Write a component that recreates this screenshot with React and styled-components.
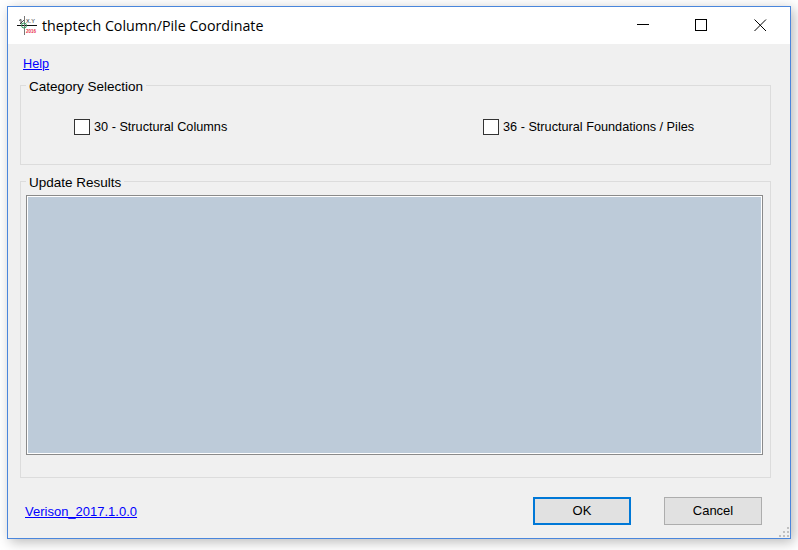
import styled, { createGlobalStyle } from "styled-components";

const GlobalStyle = createGlobalStyle`
  html, body {
    margin: 0;
    padding: 0;
    background: #ffffff;
    overflow: hidden;
  }
`;

export default function App() {
  return (
    <>
      <GlobalStyle />
      <Desktop>
        <Window>
          <TitleBar>
            <AppIcon />
            <Title>theptech Column/Pile Coordinate</Title>
            <WindowButton aria-label="Minimize">
              <svg width="13" height="13" viewBox="0 0 13 13">
                <path d="M1 5.5H13" stroke="#000" fill="none" />
              </svg>
            </WindowButton>
            <WindowButton aria-label="Maximize">
              <svg width="13" height="13" viewBox="0 0 13 13">
                <rect x="0.5" y="0.5" width="11" height="11" stroke="#000" fill="none" />
              </svg>
            </WindowButton>
            <WindowButton aria-label="Close">
              <svg width="13" height="13" viewBox="0 0 13 13">
                <path d="M0.5 0.5L12 12M12 0.5L0.5 12" stroke="#000" fill="none" />
              </svg>
            </WindowButton>
          </TitleBar>
          <Body>
            <HelpLink href="#">Help</HelpLink>
            <CategoryGroup>
              <GroupLegend>Category Selection</GroupLegend>
              <CheckRow>
                <CheckItem>
                  <CheckBox type="checkbox" />
                  30 - Structural Columns
                </CheckItem>
                <CheckItem>
                  <CheckBox type="checkbox" />
                  36 - Structural Foundations / Piles
                </CheckItem>
              </CheckRow>
            </CategoryGroup>
            <ResultsGroup>
              <GroupLegend>Update Results</GroupLegend>
              <ResultsPanel />
            </ResultsGroup>
            <Footer>
              <VersionLink href="#">Verison_2017.1.0.0</VersionLink>
              <Button $primary>OK</Button>
              <Button>Cancel</Button>
            </Footer>
            <Grip />
          </Body>
        </Window>
      </Desktop>
    </>
  );
}

function AppIcon() {
  return (
    <svg width="25" height="20" viewBox="0 0 25 20" style={{ flex: "none" }}>
      <path d="M0 9.5H20" stroke="#111" fill="none" />
      <path d="M7.5 0V19" stroke="#777" fill="none" />
      <path d="M2 4.5L4 3.5V8M3 8L7 4" stroke="#222" strokeWidth="0.8" fill="none" />
      <circle cx="7" cy="9.5" r="2.5" stroke="#3aa060" fill="none" />
      <text x="9" y="6.5" fontSize="5.5" fontFamily="Liberation Sans, sans-serif" fill="#222">X.Y</text>
      <text x="9" y="16.5" fontSize="4.5" fontWeight="700" fontFamily="Liberation Sans, sans-serif" fill="#e8304a">2016</text>
    </svg>
  );
}

const Desktop = styled.div`
  width: 798px;
  height: 550px;
  padding: 6px 7px 11px 7px;
  box-sizing: border-box;
`;

const Window = styled.div`
  width: 784px;
  height: 533px;
  box-sizing: border-box;
  border: 1px solid #4a86dc;
  background: #f0f0f0;
  box-shadow: 3px 3px 12px rgba(0, 0, 0, 0.28);
  display: flex;
  flex-direction: column;
`;

const TitleBar = styled.div`
  height: 37px;
  flex: none;
  background: #ffffff;
  display: flex;
  align-items: center;
  padding-left: 9px;
`;

const Title = styled.div`
  flex: 1;
  font-family: "Open Sans", "Noto Sans", sans-serif;
  font-size: 14.25px;
  color: #000;
`;

const WindowButton = styled.div`
  width: 59px;
  height: 37px;
  display: flex;
  align-items: center;
  justify-content: center;
`;

const Body = styled.div`
  position: relative;
  flex: 1;
  padding: 13px 19px 0 12px;
  display: flex;
  flex-direction: column;
  font-family: "Liberation Sans", Arial, sans-serif;
  font-size: 12.7px;
  color: #000;
`;

const HelpLink = styled.a`
  align-self: flex-start;
  margin-left: 3px;
  line-height: 15px;
  color: #0000ff;
  text-decoration: underline;
`;

const Group = styled.fieldset`
  margin: 0;
  padding: 0;
  box-sizing: border-box;
  border: 1px solid #dcdcdc;
  min-width: 0;
`;

const CategoryGroup = styled(Group)`
  height: 90px;
  margin-top: 3px;
`;

const ResultsGroup = styled(Group)`
  height: 307px;
  margin-top: 6px;
  padding: 4px 7px 0 0;
`;

const GroupLegend = styled.legend`
  margin-left: 5px;
  padding: 4px 3px 0;
  line-height: 16px;
  font-size: 13.5px;
`;

const CheckRow = styled.div`
  display: grid;
  grid-template-columns: 409px 1fr;
  padding: 24px 0 0 53px;
`;

const CheckItem = styled.label`
  display: flex;
  align-items: center;
  gap: 4px;
  white-space: nowrap;
`;

const CheckBox = styled.input`
  appearance: none;
  margin: 0;
  width: 16px;
  height: 16px;
  box-sizing: border-box;
  background: #ffffff;
  border: 1px solid #333333;
  flex: none;
`;

const ResultsPanel = styled.div`
  height: 260px;
  margin-left: 5px;
  box-sizing: border-box;
  background: #bdcbd9;
  border: 1px solid #8a8a8a;
  box-shadow: inset 0 0 0 1px #ffffff;
`;

const Footer = styled.div`
  display: flex;
  align-items: center;
  margin-top: 19px;
  padding-left: 5px;
`;

const VersionLink = styled.a`
  flex: 1;
  color: #0000ff;
  text-decoration: underline;
  font-size: 13px;
`;

const Button = styled.button`
  width: 98px;
  height: 28px;
  box-sizing: border-box;
  margin-left: ${(p) => (p.$primary ? "0" : "33px")};
  margin-right: ${(p) => (p.$primary ? "0" : "9px")};
  background: #e1e1e1;
  border: ${(p) => (p.$primary ? "2px solid #0078d7" : "1px solid #adadad")};
  font-family: "Liberation Sans", Arial, sans-serif;
  font-size: 13px;
  color: #000;
  padding: 0 0 2px;
`;

const Grip = styled.div`
  position: absolute;
  right: 1px;
  bottom: 1px;
  width: 2px;
  height: 2px;
  background: #c0c0c0;
  box-shadow: -4px 0 #c0c0c0, 0 -4px #c0c0c0, -8px 0 #c0c0c0, 0 -8px #c0c0c0, -4px -4px #c0c0c0;
`;
